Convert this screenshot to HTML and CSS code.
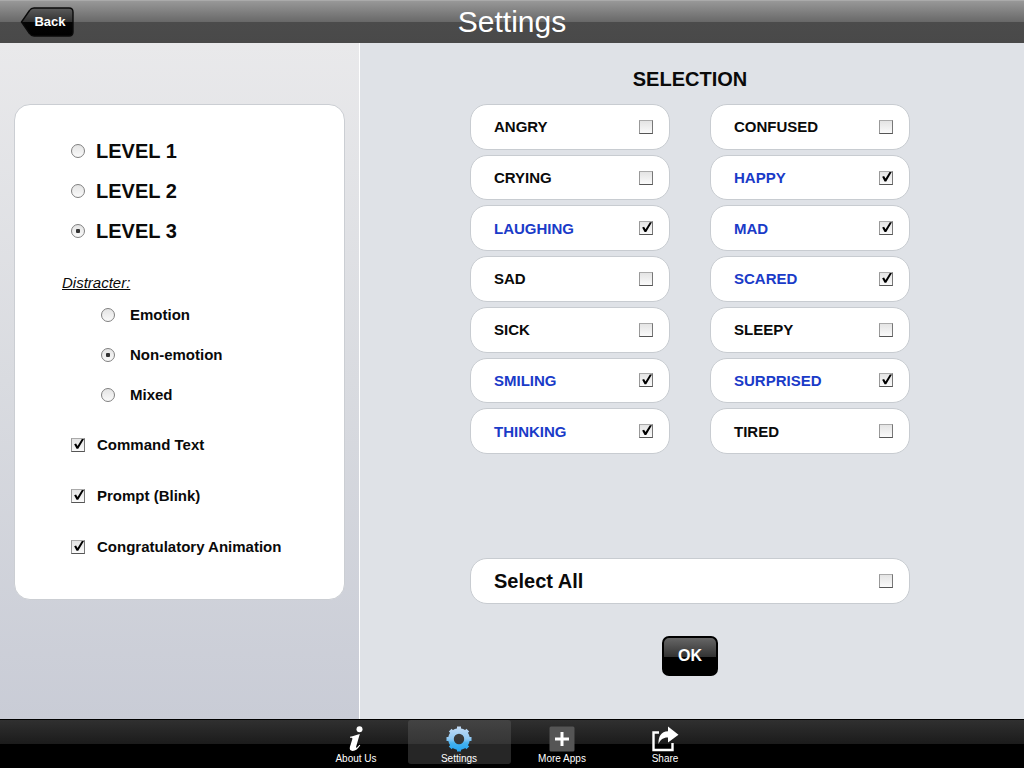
FILE: index.html
```html
<!DOCTYPE html>
<html lang="en">
<head>
    <meta charset="UTF-8">
    <meta name="viewport" content="width=device-width, initial-scale=1.0">
    <title>Settings</title>
    <link rel="stylesheet" href="styles.css">
</head>
<body>

    <header class="header">
        <button class="back" type="button">
            <svg class="back-shape" viewBox="0 0 54 30" aria-hidden="true">
                <defs>
                    <linearGradient id="back-fill" x1="0" y1="0" x2="0" y2="1">
                        <stop offset="0" stop-color="#5c5c5c"/>
                        <stop offset="0.5" stop-color="#303030"/>
                        <stop offset="0.5" stop-color="#050505"/>
                        <stop offset="1" stop-color="#000"/>
                    </linearGradient>
                </defs>
                <path d="M1.5 15 L9.5 3.5 Q11 1 14 1 H49 Q53 1 53 5 V25 Q53 29 49 29 H14 Q11 29 9.5 26.5 Z" fill="url(#back-fill)" stroke="#0a0a0a" stroke-width="1.4"/>
            </svg>
            <span class="back-text">Back</span>
        </button>
        <h1 class="title">Settings</h1>
    </header>

    <main class="main">
        <aside class="sidebar">
            <form class="options">
                <div class="levels">
                    <label class="level"><input class="radio" type="radio" name="level">LEVEL 1</label>
                    <label class="level"><input class="radio" type="radio" name="level">LEVEL 2</label>
                    <label class="level"><input class="radio" type="radio" name="level" checked>LEVEL 3</label>
                </div>
                <p class="group-title">Distracter:</p>
                <div class="distracters">
                    <label class="option"><input class="radio" type="radio" name="distracter">Emotion</label>
                    <label class="option"><input class="radio" type="radio" name="distracter" checked>Non-emotion</label>
                    <label class="option"><input class="radio" type="radio" name="distracter">Mixed</label>
                </div>
                <div class="extras">
                    <label class="option"><input class="check" type="checkbox" checked>Command Text</label>
                    <label class="option"><input class="check" type="checkbox" checked>Prompt (Blink)</label>
                    <label class="option"><input class="check" type="checkbox" checked>Congratulatory Animation</label>
                </div>
            </form>
        </aside>

        <section class="content">
            <form class="selection">
                <h2 class="selection-title">SELECTION</h2>
                <div class="emotions">
                    <label class="item">ANGRY<input class="check" type="checkbox"></label>
                    <label class="item">CONFUSED<input class="check" type="checkbox"></label>
                    <label class="item">CRYING<input class="check" type="checkbox"></label>
                    <label class="item">HAPPY<input class="check" type="checkbox" checked></label>
                    <label class="item">LAUGHING<input class="check" type="checkbox" checked></label>
                    <label class="item">MAD<input class="check" type="checkbox" checked></label>
                    <label class="item">SAD<input class="check" type="checkbox"></label>
                    <label class="item">SCARED<input class="check" type="checkbox" checked></label>
                    <label class="item">SICK<input class="check" type="checkbox"></label>
                    <label class="item">SLEEPY<input class="check" type="checkbox"></label>
                    <label class="item">SMILING<input class="check" type="checkbox" checked></label>
                    <label class="item">SURPRISED<input class="check" type="checkbox" checked></label>
                    <label class="item">THINKING<input class="check" type="checkbox" checked></label>
                    <label class="item">TIRED<input class="check" type="checkbox"></label>
                </div>
                <label class="item select-all">Select All<input class="check" type="checkbox"></label>
                <button class="ok" type="button">OK</button>
            </form>
        </section>
    </main>

    <nav class="tabs">
        <a class="tab" href="#about">
            <svg class="tab-icon" viewBox="0 0 28 28" aria-hidden="true">
                <circle cx="17.5" cy="4.2" r="3" fill="#fff"/>
                <path d="M8 11.8 C11.5 11 14.2 10 17.8 9 L14.2 21.4 C13.8 22.9 14.4 23 15.2 22.3 C16.1 21.5 16.8 20.6 17.4 19.7 L18.3 20.3 C16.2 23.7 13.4 26 10.7 26 C8 26 7.2 24.2 8 21.6 L10.3 14.2 C10.7 12.9 10.2 12.7 8 12.7 Z" fill="#fff"/>
            </svg>
            About Us
        </a>
        <a class="tab active" href="#settings">
            <svg class="tab-icon" viewBox="0 0 28 28" aria-hidden="true">
                <defs>
                    <linearGradient id="gear-fill" gradientUnits="userSpaceOnUse" x1="0" y1="1" x2="0" y2="27">
                        <stop offset="0" stop-color="#c6dcf5"/>
                        <stop offset="0.5" stop-color="#8fc8f2"/>
                        <stop offset="0.65" stop-color="#45b2ef"/>
                        <stop offset="1" stop-color="#21a3f0"/>
                    </linearGradient>
                </defs>
                <circle cx="14" cy="14" r="8" fill="none" stroke="url(#gear-fill)" stroke-width="5.6"/>
                <g stroke="url(#gear-fill)" stroke-width="4">
                    <path d="M14 1.5 L14.01 6 M14 22 L14.01 26.5 M1.5 14 L6 14.01 M22 14 L26.5 14.01"/>
                    <path d="M5.2 5.2 L8.3 8.3 M19.7 8.3 L22.8 5.2 M5.2 22.8 L8.3 19.7 M19.7 19.7 L22.8 22.8"/>
                </g>
            </svg>
            Settings
        </a>
        <a class="tab" href="#more">
            <svg class="tab-icon" viewBox="0 0 28 28" aria-hidden="true">
                <rect x="1.5" y="1.5" width="25" height="25" rx="1.5" fill="#555"/>
                <path d="M14 7 V21 M7 14 H21" stroke="#fff" stroke-width="3"/>
            </svg>
            More Apps
        </a>
        <a class="tab" href="#share">
            <svg class="tab-icon" viewBox="0 0 28 28" aria-hidden="true">
                <path d="M8 7.5 H2.5 V25 H21.5 V18" fill="none" stroke="#fff" stroke-width="2.4"/>
                <path d="M7.5 19 C7.2 11.5 10 6.5 17 6.2 V1.5 L27.5 9.8 L17 17.5 V12.6 C12.5 12.4 9.5 14.5 7.5 19 Z" fill="#fff"/>
            </svg>
            Share
        </a>
    </nav>

</body>
</html>
```

FILE: styles.css
```css
* {
    box-sizing: border-box;
}
body {
    margin: 0;
    min-height: 100vh;
    display: flex;
    flex-direction: column;
    font-family: "Liberation Sans", Arial, sans-serif;
    font-size: 15px;
    color: #0a0a0a;
}
.header {
    height: 43px;
    display: grid;
    grid-template-columns: 1fr auto 1fr;
    align-items: center;
    padding: 0 20px;
    background: linear-gradient(#989898 0, #686868 21px, #4b4b4b 21px, #494949 100%);
    border-top: 1px solid #aaa;
}
.title {
    grid-column: 2;
    margin: 0;
    font-size: 30px;
    line-height: 42px;
    font-weight: normal;
    color: #fff;
}
.back {
    position: relative;
    width: 54px;
    height: 30px;
    padding: 0 0 2px 6px;
    border: 0;
    background: none;
    font: bold 13px "Liberation Sans", Arial, sans-serif;
    color: #fff;
}
/* arrow outline behind the text */
.back-shape {
    position: absolute;
    inset: 0;
    width: 100%;
    height: 100%;
}
.back-text {
    position: relative;
}
.main {
    flex: 1;
    display: flex;
}
.sidebar {
    width: 360px;
    padding: 61px 14px 24px 14px;
    background: linear-gradient(#e9e9eb, #d9dbe0 50%, #c9ccd6);
    border-right: 1px solid #fff;
}
.options {
    padding: 34px 20px 42px 56px;
    background: #fff;
    border: 1px solid #cbced3;
    border-radius: 16px;
}
.levels, .distracters, .extras {
    display: flex;
    flex-direction: column;
}
.levels {
    gap: 16px;
}
.distracters {
    gap: 20px;
    margin: 12px 0 30px 30px;
}
.extras {
    gap: 31px;
}
.level, .option {
    display: flex;
    align-items: center;
    gap: 12px;
    font-weight: bold;
    line-height: 20px;
}
.level {
    gap: 11px;
    font-size: 20px;
    line-height: 24px;
}
.distracters .option {
    gap: 15px;
}
.group-title {
    margin: 30px 0 0 -9px;
    font-size: 15px;
    line-height: 20px;
    font-style: italic;
    text-decoration: underline;
}
.radio, .check {
    appearance: none;
    flex: none;
    display: grid;
    place-items: center;
    width: 14px;
    height: 14px;
    margin: 0;
    border: 1px solid #808080;
    background: linear-gradient(#e4e4e4, #fafafa);
}
.radio {
    border-radius: 50%;
}
.radio:checked::before {
    content: "";
    width: 4px;
    height: 4px;
    border-radius: 1px;
    background: #333;
}
.check {
    border-color: #aaa #777 #555 #999;
}
.check:checked::before {
    content: "";
    width: 12px;
    height: 12px;
    background: #000;
    clip-path: polygon(18% 44%, 34% 38%, 46% 58%, 82% 0, 100% 0, 52% 82%, 38% 82%);
}
.content {
    flex: 1;
    padding: 24px 64px 20px 60px;
    background: #dfe2e7;
}
.selection {
    max-width: 440px;
    margin: 0 auto;
    display: flex;
    flex-direction: column;
}
.selection-title {
    margin: 0 0 13px;
    font-size: 20px;
    line-height: 24px;
    text-align: center;
}
.emotions {
    display: grid;
    grid-template-columns: 1fr 1fr;
    grid-auto-rows: 1fr;
    gap: 5px 40px;
    min-height: 350px;
}
.item {
    display: flex;
    align-items: center;
    justify-content: space-between;
    min-height: 45px;
    padding: 0 16px 0 23px;
    background: #fff;
    border: 1px solid #c8ccd1;
    border-radius: 17px;
    font-weight: bold;
}
.item:has(:checked) {
    color: #1a3bc8;
}
.select-all {
    min-height: 46px;
    margin-top: 104px;
    font-size: 20px;
}
.ok {
    align-self: center;
    width: 56px;
    height: 40px;
    margin-top: 32px;
    border: 2px solid #000;
    border-radius: 7px;
    background: linear-gradient(#666, #333 52%, #000 52%);
    font: bold 16px "Liberation Sans", Arial, sans-serif;
    color: #fff;
}
.tabs {
    display: flex;
    justify-content: center;
    height: 49px;
    padding-right: 3px;
    border-top: 1px solid #000;
    background: linear-gradient(#303030, #1b1b1b 24px, #000 24px);
}
.tab {
    width: 103px;
    height: 44px;
    padding-top: 5px;
    display: flex;
    flex-direction: column;
    align-items: center;
    font-size: 10px;
    line-height: 12px;
    color: #fff;
    text-decoration: none;
}
.tab.active {
    border-radius: 3px;
    background: linear-gradient(#434343, #353535 24px, #262626 24px);
}
.tab-icon {
    flex: none;
    width: 28px;
    height: 28px;
}
```
